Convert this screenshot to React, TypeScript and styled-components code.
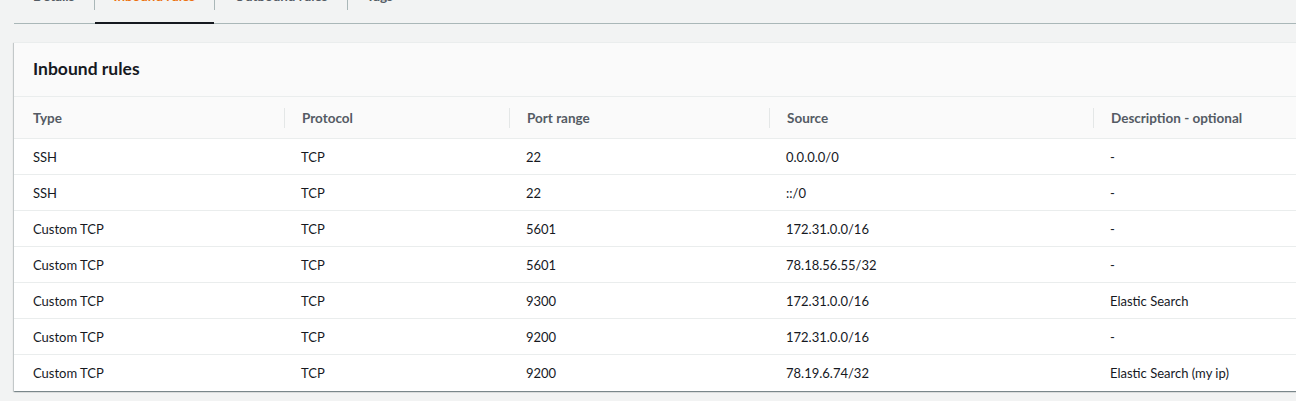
import React from "react";
import styled, { createGlobalStyle } from "styled-components";

const Global = createGlobalStyle`
  html, body { margin: 0; padding: 0; background: #f2f3f3; overflow: hidden; }
  body { font-family: Lato, "Noto Sans", sans-serif; color: #16191f; }
`;

const Page = styled.div`
  padding-left: 14px;
  height: 401px;
  overflow: hidden;
`;

const TabBar = styled.div`
  display: flex;
  align-items: flex-start;
  margin-top: -14px;
  height: 37px;
  border-bottom: 1px solid #aab7b8;
`;

const Tab = styled.div<{ $active?: boolean }>`
  position: relative;
  height: 37px;
  padding: 0 19px;
  line-height: 20px;
  font-size: 13.4px;
  font-weight: 700;
  color: ${(p) => (p.$active ? "#ec7211" : "#545b64")};
  &::after {
    content: "";
    display: ${(p) => (p.$active ? "block" : "none")};
    position: absolute;
    left: 0;
    right: 0;
    bottom: -1px;
    height: 2px;
    background: #16191f;
  }
`;

const TabDivider = styled.div`
  width: 1px;
  height: 24px;
  background: #aab7b8;
`;

const Panel = styled.section`
  margin-top: 18px;
  margin-right: -20px;
  background: #ffffff;
  box-shadow: 0 1px 1px 0 rgba(0, 28, 36, 0.3), 1px 1px 1px 0 rgba(0, 28, 36, 0.15),
    -1px 1px 1px 0 rgba(0, 28, 36, 0.15);
  border-top: 1px solid #eaeded;
`;

const PanelHeader = styled.header`
  background: #fafafa;
  padding: 0 19px;
  height: 53px;
  display: flex;
  align-items: center;
  border-bottom: 1px solid #eaeded;
`;

const Title = styled.h2`
  margin: 0;
  font-size: 17.5px;
  font-weight: 700;
  color: #16191f;
  position: relative;
  top: -1px;
`;

const Row = styled.div<{ $head?: boolean }>`
  display: grid;
  grid-template-columns: 270px 225px 260px 324px 1fr;
  align-items: center;
  height: ${(p) => (p.$head ? "41px" : "35px")};
  background: ${(p) => (p.$head ? "#fafafa" : "#ffffff")};
  border-bottom: 1px solid #eaeded;
  &:last-child { border-bottom: none; height: 36px; }
`;

const HeadCell = styled.div<{ $first?: boolean }>`
  padding-left: ${(p) => (p.$first ? "19px" : "17px")};
  border-left: ${(p) => (p.$first ? "none" : "1px solid #e4e7e7")};
  line-height: 20px;
  font-size: 13.5px;
  font-weight: 700;
  color: #545b64;
`;

const Cell = styled.div<{ $first?: boolean }>`
  padding-left: ${(p) => (p.$first ? "19px" : "17px")};
  font-size: 13px;
  color: #16191f;
  white-space: nowrap;
`;

const headers = ["Type", "Protocol", "Port range", "Source", "Description - optional"];
const rows = [
  ["SSH", "TCP", "22", "0.0.0.0/0", "-"],
  ["SSH", "TCP", "22", "::/0", "-"],
  ["Custom TCP", "TCP", "5601", "172.31.0.0/16", "-"],
  ["Custom TCP", "TCP", "5601", "78.18.56.55/32", "-"],
  ["Custom TCP", "TCP", "9300", "172.31.0.0/16", "Elastic Search"],
  ["Custom TCP", "TCP", "9200", "172.31.0.0/16", "-"],
  ["Custom TCP", "TCP", "9200", "78.19.6.74/32", "Elastic Search (my ip)"],
];

const tabs = ["Details", "Inbound rules", "Outbound rules", "Tags"];

export default function App() {
  return (
    <Page>
      <Global />
      <TabBar>
        {tabs.map((t, i) => (
          <React.Fragment key={t}>
            <Tab $active={i === 1}>{t}</Tab>
            {i < tabs.length - 1 && <TabDivider />}
          </React.Fragment>
        ))}
      </TabBar>
      <Panel>
        <PanelHeader>
          <Title>Inbound rules</Title>
        </PanelHeader>
        <div>
          <Row $head>
            {headers.map((h, i) => (
              <HeadCell key={h} $first={i === 0}>{h}</HeadCell>
            ))}
          </Row>
          {rows.map((r, ri) => (
            <Row key={ri}>
              {r.map((c, ci) => (
                <Cell key={ci} $first={ci === 0}>{c}</Cell>
              ))}
            </Row>
          ))}
        </div>
      </Panel>
    </Page>
  );
}
